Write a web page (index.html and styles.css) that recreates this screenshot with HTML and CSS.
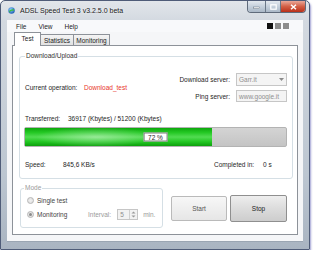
FILE: index.html
```html
<!DOCTYPE html>
<html>
<head>
<meta charset="utf-8">
<link rel="stylesheet" href="styles.css">
</head>
<body>
<div class="window">
  <div class="titlebar">
    <svg class="appicon" width="7" height="7" viewBox="0 0 14 14">
      <defs>
        <radialGradient id="g1" cx="40%" cy="35%" r="65%">
          <stop offset="0" stop-color="#8fd0ff"/>
          <stop offset="1" stop-color="#1d5fb3"/>
        </radialGradient>
      </defs>
      <circle cx="7" cy="7" r="6.5" fill="url(#g1)"/>
      <path d="M2 9 C4 5, 8 4, 12 5 L11 8 C8 7, 5 8, 3 11 Z" fill="#3cbf3c"/>
    </svg>
    <span class="title">ADSL Speed Test 3 v3.2.5.0 beta</span>
    <div class="controls">
      <span class="ctl min"><svg width="7" height="5" viewBox="0 0 7 5"><rect x="0.5" y="3" width="6" height="1.6" fill="#fff" stroke="#4a5766" stroke-width="0.4"/></svg></span>
      <span class="ctl max"><svg width="7" height="6" viewBox="0 0 7 6"><rect x="0.8" y="0.8" width="5.4" height="4.4" fill="none" stroke="#fff" stroke-width="1.2"/></svg></span>
      <span class="ctl close"><svg width="7" height="6" viewBox="0 0 7 6"><path d="M1 0.8 L6 5.2 M6 0.8 L1 5.2" stroke="#fff" stroke-width="1.5"/></svg></span>
    </div>
  </div>
  <div class="frame">
    <div class="client">
      <div class="menubar">
        <span class="menu">File</span>
        <span class="menu">View</span>
        <span class="menu">Help</span>
        <div class="squares"><i class="sq dark"></i><i class="sq"></i><i class="sq"></i></div>
      </div>
      <div class="tabs">
        <span class="tab active t1">Test</span>
        <span class="tab t2">Statistics</span>
        <span class="tab t3">Monitoring</span>
      </div>
      <div class="panel">
        <fieldset class="group main">
          <legend>Download/Upload</legend>
          <div class="toprow">
            <div class="op"><span class="lbl-op">Current operation:</span><span class="red">Download_test</span></div>
            <div class="servers">
              <div class="srow"><span>Download server:</span><div class="combo"><span>Garr.it</span><span class="arrow"><svg width="5" height="3" viewBox="0 0 5 3"><path d="M0 0 H5 L2.5 3 Z" fill="#8a8a8a"/></svg></span></div></div>
              <div class="srow"><span>Ping server:</span><div class="input">www.google.it</div></div>
            </div>
          </div>
          <div class="row tr"><span class="lbl-tr">Transferred:</span><span>36917 (Kbytes) / 51200 (Kbytes)</span></div>
          <div class="progress"><div class="fill" style="width:71.5%"></div><span class="pct">72 %</span></div>
          <div class="row sp">
            <div class="speedpart"><span class="lbl-sp">Speed:</span><span>845,6 KB/s</span></div>
            <span class="lbl-ci">Completed in:</span><span>0 s</span>
          </div>
        </fieldset>
        <div class="bottom">
          <fieldset class="group mode">
            <legend>Mode</legend>
            <div class="rrow"><span class="radio"></span><span class="rtext">Single test</span></div>
            <div class="rrow"><span class="radio checked"></span><span class="rtext w">Monitoring</span><span class="dim">Interval:</span><span class="spin"><span>5</span><span class="arrows"><svg width="5" height="9" viewBox="0 0 5 9"><path d="M0.5 3.5 L2.5 1.5 L4.5 3.5 Z M0.5 5.5 L2.5 7.5 L4.5 5.5 Z" fill="#9a9a9a"/></svg></span></span><span class="dim min-l">min.</span></div>
          </fieldset>
          <button class="btn start">Start</button>
          <button class="btn stop">Stop</button>
        </div>
      </div>
    </div>
  </div>
</div>
</body>
</html>
```

FILE: styles.css
```css
* { box-sizing: border-box; }
body {
  margin: 0;
  background: #fff;
  font-family: "Liberation Sans", Arial, sans-serif;
  font-size: 6.5px;
  color: #1e1e1e;
}
.window {
  width: 310px;
  height: 250px;
  border: 1px solid #4f5c78;
  border-radius: 5px 5px 1px 1px;
  background: linear-gradient(to bottom, #e2e6ea 0, #d3d9e0 20px, #bcc6d1 70%, #a9b4c1 100%);
  display: flex;
  flex-direction: column;
  box-shadow: 1px 2px 2px rgba(70, 70, 170, 0.5);
}
.titlebar {
  height: 19px;
  display: flex;
  align-items: center;
  padding-left: 7px;
}
.appicon { display: block; }
.title {
  margin-left: 5px;
  font-size: 7px;
  color: #1a1a1a;
  text-shadow: 0 0 3px #fff;
}
.controls {
  display: flex;
  margin-left: auto;
  margin-right: 3px;
  align-self: flex-start;
  height: 12px;
  border: 1px solid #5f6b7b;
  border-top: none;
  border-radius: 0 0 4px 4px;
  overflow: hidden;
}
.ctl {
  display: flex;
  align-items: center;
  justify-content: center;
  background: linear-gradient(to bottom, #e3e8ee 0, #c5d0dc 50%, #aab8c7 100%);
}
.ctl svg { display: block; }
.min { width: 17px; }
.max { width: 15px; border-left: 1px solid #6b7888; }
.close {
  width: 25px;
  border-left: 1px solid #6b7888;
  background: linear-gradient(to bottom, #eaa899 0, #d35f45 50%, #b9301a 100%);
}
.frame {
  flex: 1;
  display: flex;
  padding: 0 6px 7px;
}
.client {
  flex: 1;
  display: flex;
  flex-direction: column;
  background: #f5f6f8;
  border: 1px solid #9aa5b2;
  border-width: 0 0 1px 0;
}
.menubar {
  height: 12px;
  display: flex;
  align-items: center;
  padding-left: 3px;
  background: #f8f9fb;
}
.menu { padding: 0 6px; }
.squares {
  margin-left: auto;
  margin-right: 14px;
  display: flex;
  gap: 2px;
}
.sq {
  width: 6px;
  height: 6px;
  background: #8c8c8c;
  display: block;
}
.sq.dark { background: #111; }
.tabs {
  height: 13px;
  display: flex;
  align-items: flex-end;
  padding-left: 7px;
}
.tab {
  height: 11px;
  border: 1px solid #8d9299;
  border-bottom: none;
  background: linear-gradient(to bottom, #f4f4f4, #e1e1e1);
  display: flex;
  align-items: center;
  justify-content: center;
  margin-left: -1px;
  color: #222;
}
.tab.t1 { width: 27px; margin-left: 0; }
.tab.t2 { width: 34px; }
.tab.t3 { width: 37px; }
.tab.active {
  height: 14px;
  background: #fff;
  margin-bottom: -1px;
  position: relative;
  padding-bottom: 2px;
}
.panel {
  flex: 1;
  margin: 0 5px 6px;
  border: 1px solid #8d9299;
  background: #fff;
  padding: 6px 4px 0 6px;
}
.group {
  margin: 0;
  border: 1px solid #d5dfe5;
  border-radius: 3px;
  min-width: 0;
}
.group legend {
  padding: 0 1px;
  line-height: 8px;
  color: #333;
}
.main { padding: 13px 5px 9px 5px; }
.toprow {
  display: flex;
  justify-content: space-between;
  align-items: center;
}
.op { display: flex; }
.lbl-op { width: 59px; }
.red { color: #e8352d; }
.servers {
  display: flex;
  flex-direction: column;
  gap: 4px;
}
.srow {
  display: flex;
  align-items: center;
  justify-content: flex-end;
  gap: 6px;
}
.combo, .input {
  width: 51px;
  border: 1px solid #c6c6c6;
  background: #f4f4f4;
  color: #8e8e8e;
  display: flex;
  align-items: center;
  padding-left: 2px;
}
.combo { height: 13px; }
.input { height: 12px; }
.arrow {
  margin-left: auto;
  width: 10px;
  display: flex;
  justify-content: center;
}
.arrow svg { display: block; }
.row {
  display: flex;
  align-items: center;
  height: 10px;
}
.tr { margin-top: 11px; }
.lbl-tr { width: 43px; }
.progress {
  margin-top: 4px;
  margin-left: -1px;
  height: 20px;
  border: 1px solid #b3b3b3;
  border-radius: 2px;
  background: linear-gradient(to bottom, #d4d4d4, #c4c4c4);
  position: relative;
}
.fill {
  height: 100%;
  background:
    radial-gradient(ellipse 60px 10px at 38% 50%, rgba(255,255,255,0.4), rgba(255,255,255,0) 100%),
    linear-gradient(to bottom, #0ca80c 0%, #24c824 25%, #52dc52 50%, #24c824 75%, #0ca00c 100%);
}
.pct {
  position: absolute;
  left: 50%;
  top: 50%;
  transform: translate(-50%, -50%);
  background: #fff;
  border: 1px solid #7a7a7a;
  padding: 0 4px;
  line-height: 7px;
}
.sp { margin-top: 12px; }
.speedpart { display: flex; width: 189px; }
.lbl-sp { width: 38px; }
.lbl-ci { width: 49px; }
.bottom {
  display: flex;
  align-items: flex-start;
  margin-top: 5px;
}
.mode {
  margin-left: 1px;
  width: 143px;
  padding: 2px 5px 7px 6px;
  display: flex;
  flex-direction: column;
  gap: 2px;
}
.mode legend { color: #9a9a9a; margin-left: -3px; }
.rrow {
  display: flex;
  align-items: center;
  height: 12px;
  color: #444;
}
.radio {
  width: 7px;
  height: 7px;
  border-radius: 50%;
  border: 1px solid #b6b6b6;
  background: radial-gradient(circle at 50% 50%, #f0f0f0, #dcdcdc);
  margin-right: 3px;
  display: flex;
  align-items: center;
  justify-content: center;
}
.radio.checked::after {
  content: "";
  width: 3px;
  height: 3px;
  border-radius: 50%;
  background: #8a8a8a;
}
.rtext.w { width: 51px; }
.dim { color: #9a9a9a; }
.spin {
  margin-left: 6px;
  width: 21px;
  height: 11px;
  border: 1px solid #c6c6c6;
  background: #f2f2f2;
  color: #8e8e8e;
  display: flex;
  align-items: center;
  padding-left: 2px;
}
.arrows {
  margin-left: auto;
  width: 8px;
  height: 100%;
  border-left: 1px solid #d0d0d0;
  display: flex;
  align-items: center;
  justify-content: center;
}
.arrows svg { display: block; }
.min-l { margin-left: 5px; }
.btn {
  font-family: inherit;
  font-size: 6.5px;
  padding: 0;
  border: 1px solid #bababa;
  border-radius: 2px;
  background: linear-gradient(to bottom, #f7f7f7, #e6e6e6);
  color: #555;
}
.start {
  width: 56px;
  height: 25px;
  margin-left: 8px;
  margin-top: 12px;
}
.stop {
  width: 57px;
  height: 27px;
  margin-left: 3px;
  margin-top: 11px;
  border-color: #8f8f8f;
  background: linear-gradient(to bottom, #eeeeee 0, #dcdcdc 50%, #cdcdcd 100%);
  color: #222;
}
```
